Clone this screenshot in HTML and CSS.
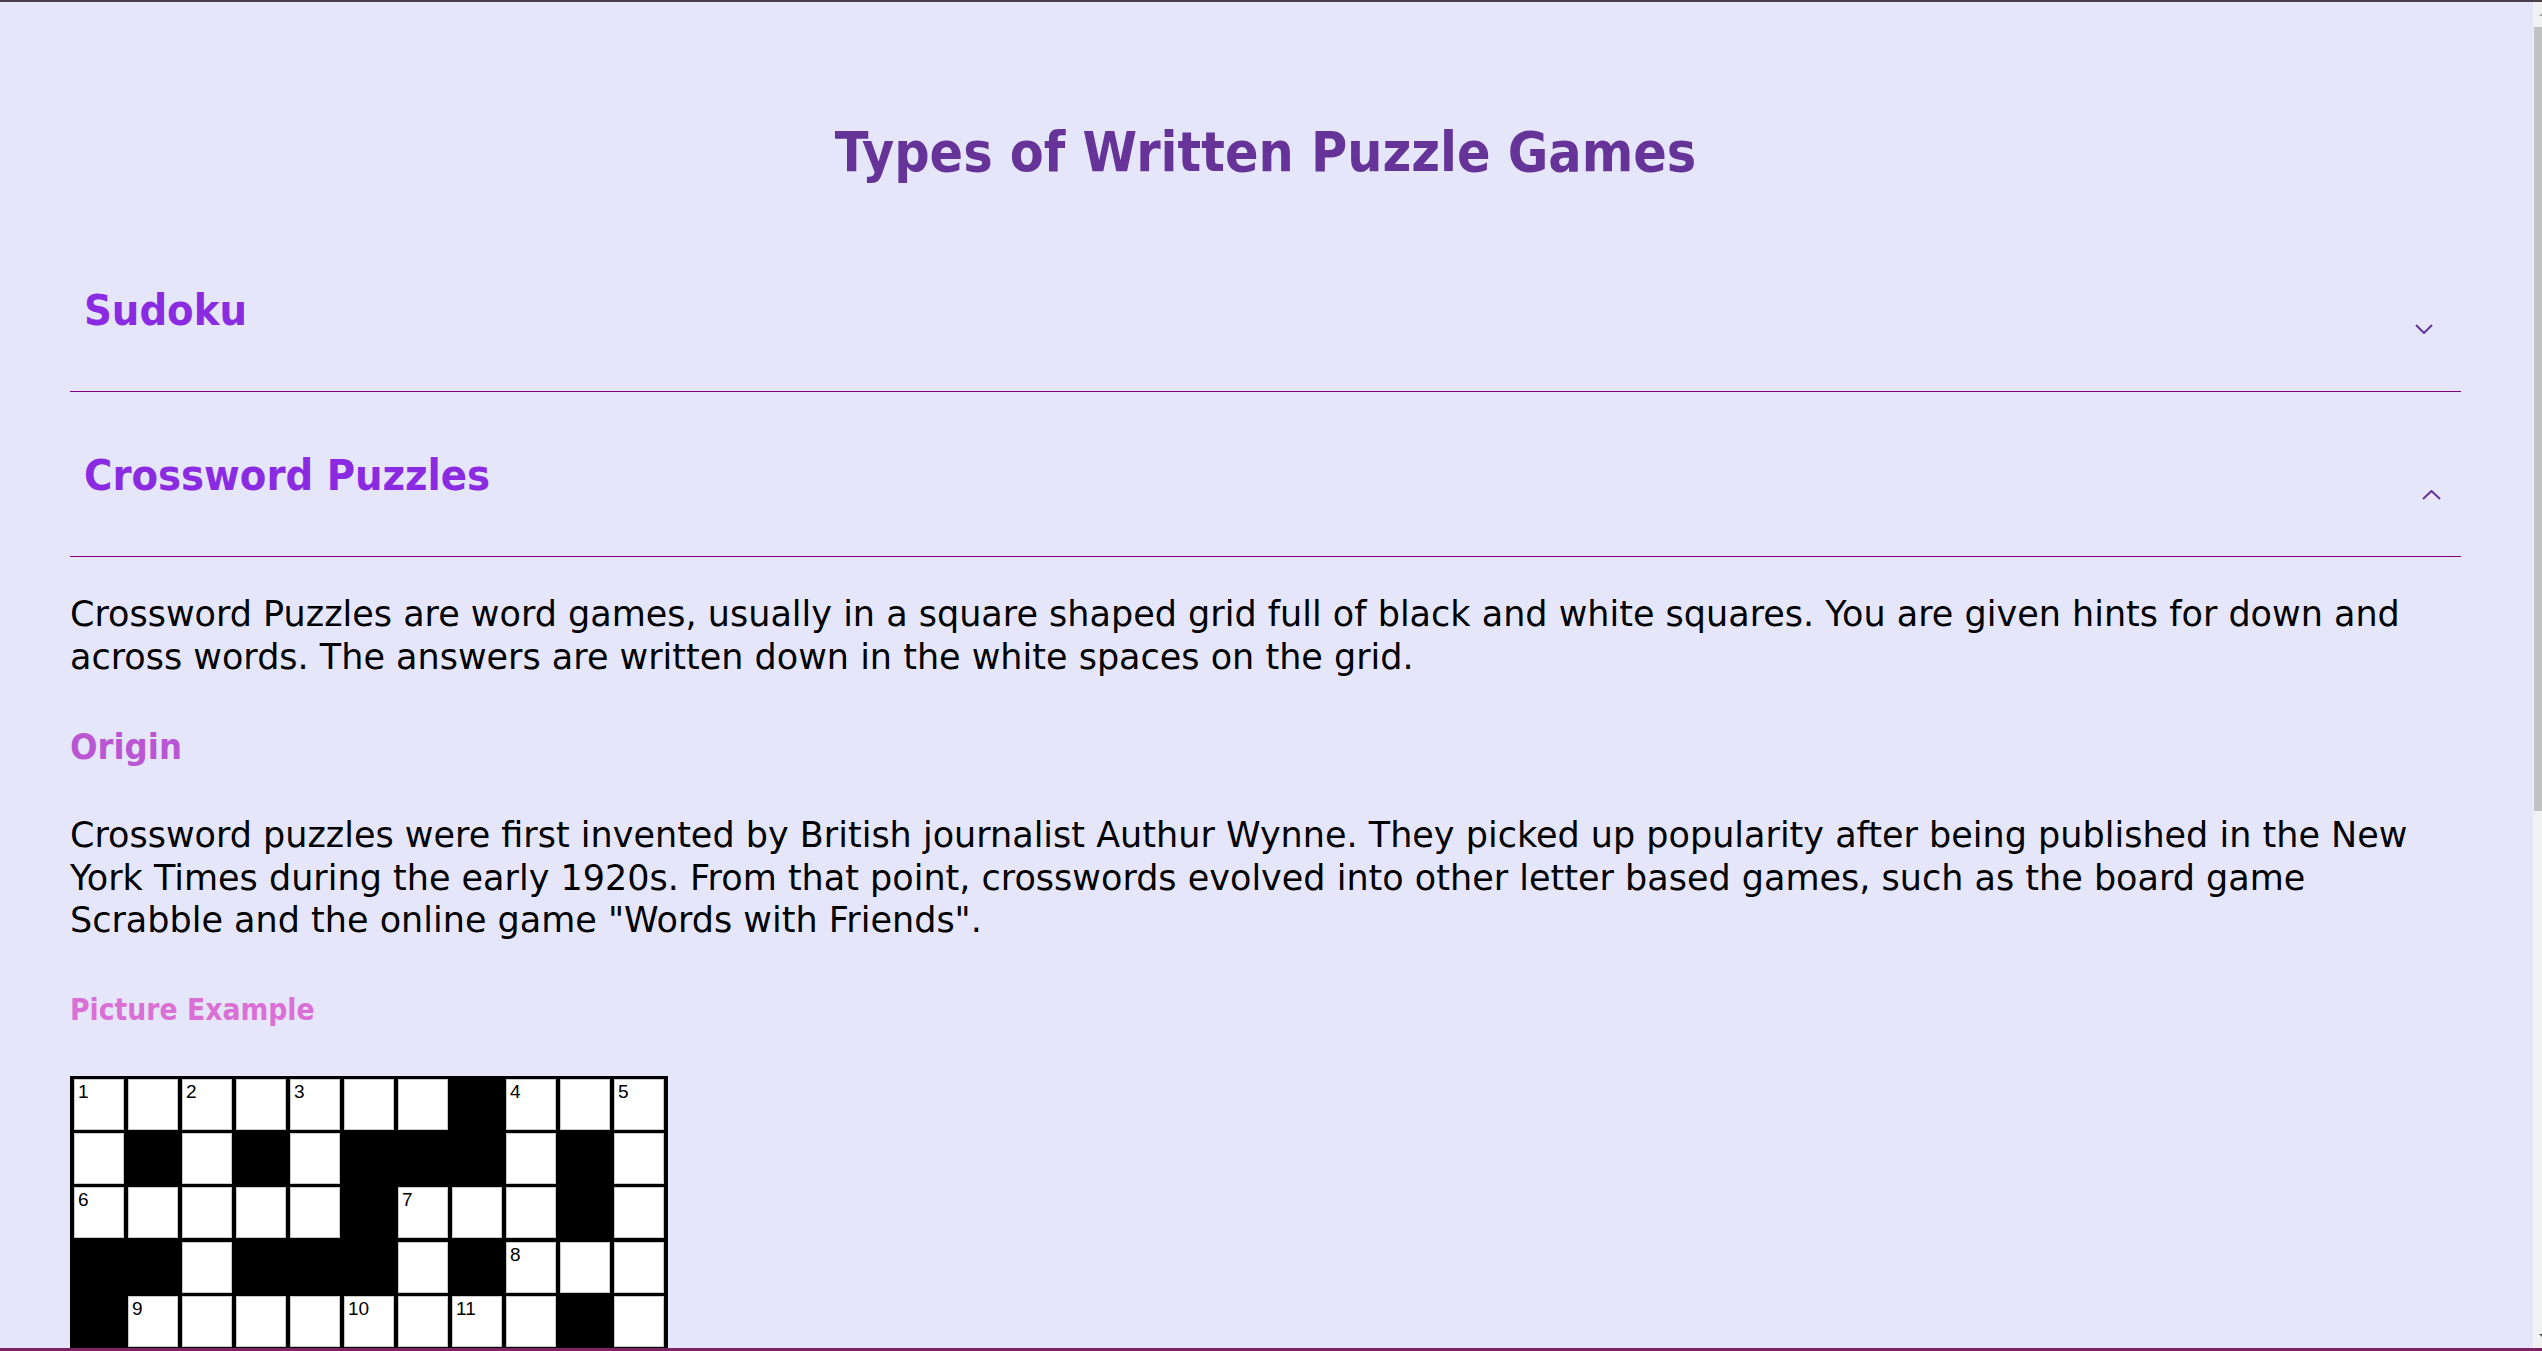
FILE: index.html
```html
<!DOCTYPE html>
<html lang="en">
<head>
<meta charset="utf-8">
<title>Types of Written Puzzle Games</title>
<link rel="stylesheet" href="styles.css">
</head>
<body>
<div class="window">
  <div class="topline"></div>
  <div class="viewport">
    <main class="page">
      <h1 class="title">Types of Written Puzzle Games</h1>

      <section class="acc">
        <div class="acc-head">
          <h2 class="acc-title">Sudoku</h2>
          <svg class="chev chev-down" viewBox="0 0 18 10" width="18" height="10"><polyline points="1,1 9,9 17,1"/></svg>
        </div>
      </section>

      <section class="acc">
        <div class="acc-head">
          <h2 class="acc-title">Crossword Puzzles</h2>
          <svg class="chev chev-up" viewBox="0 0 19 10" width="19" height="10"><polyline points="1,9 9.5,1 18,9"/></svg>
        </div>
        <div class="acc-body">
          <p class="text first">Crossword Puzzles are word games, usually in a square shaped grid full of black and white squares. You are given hints for down and across words. The answers are written down in the white spaces on the grid.</p>
          <h3 class="sub">Origin</h3>
          <p class="text">Crossword puzzles were first invented by British journalist Authur Wynne. They picked up popularity after being published in the New York Times during the early 1920s. From that point, crosswords evolved into other letter based games, such as the board game Scrabble and the online game "Words with Friends".</p>
          <h4 class="sub2">Picture Example</h4>
          <div class="grid">
            <div class="c"><span>1</span></div><div class="c"></div><div class="c"><span>2</span></div><div class="c"></div><div class="c"><span>3</span></div><div class="c"></div><div class="c"></div><div class="b"></div><div class="c"><span>4</span></div><div class="c"></div><div class="c"><span>5</span></div>
            <div class="c"></div><div class="b"></div><div class="c"></div><div class="b"></div><div class="c"></div><div class="b"></div><div class="b"></div><div class="b"></div><div class="c"></div><div class="b"></div><div class="c"></div>
            <div class="c"><span>6</span></div><div class="c"></div><div class="c"></div><div class="c"></div><div class="c"></div><div class="b"></div><div class="c"><span>7</span></div><div class="c"></div><div class="c"></div><div class="b"></div><div class="c"></div>
            <div class="b"></div><div class="b"></div><div class="c"></div><div class="b"></div><div class="b"></div><div class="b"></div><div class="c"></div><div class="b"></div><div class="c"><span>8</span></div><div class="c"></div><div class="c"></div>
            <div class="b"></div><div class="c"><span>9</span></div><div class="c"></div><div class="c"></div><div class="c"></div><div class="c"><span>10</span></div><div class="c"></div><div class="c"><span>11</span></div><div class="c"></div><div class="b"></div><div class="c"></div>
          </div>
        </div>
      </section>
    </main>
    <div class="scrollbar">
      <div class="sb-btn"><span class="sb-arrow-up"></span></div>
      <div class="sb-thumb"></div>
      <div class="sb-track"></div>
      <div class="sb-btn sb-btn-bottom"><span class="sb-arrow-down"></span></div>
    </div>
  </div>
  <div class="bottomline"></div>
</div>
</body>
</html>
```

FILE: styles.css
```css
html, body {
  margin: 0;
  padding: 0;
  height: 100%;
  overflow: hidden;
}

body {
  background: #e6e6fa;
  font-family: "DejaVu Sans Condensed", "DejaVu Sans", sans-serif;
  color: #000;
}

.window {
  height: 100vh;
  display: flex;
  flex-direction: column;
}

.topline {
  height: 2px;
  background: #4b3f4b;
  flex: none;
}

.bottomline {
  height: 3px;
  background: #7d2262;
  flex: none;
}

.viewport {
  flex: 1;
  display: flex;
  min-height: 0;
}

.page {
  flex: 1;
  min-width: 0;
  overflow: hidden;
  padding: 0 72px 0 70px;
}

.title {
  margin: 118px 0 43px;
  font-size: 55px;
  line-height: 64px;
  font-weight: bold;
  text-align: center;
  color: #663399;
}

.acc-head {
  display: flex;
  justify-content: space-between;
  align-items: flex-start;
  padding: 58px 0 56px 14px;
  border-bottom: 1px solid #800080;
}

.acc-title {
  margin: 0;
  font-size: 43px;
  line-height: 50px;
  font-weight: bold;
  color: #8a2be2;
}

.chev {
  flex: none;
  fill: none;
  stroke: #663399;
  stroke-width: 2;
}

.chev-down {
  margin: 39px 28px 0 0;
}

.chev-up {
  margin: 40px 20px 0 0;
}

.text {
  margin: 47px 0 0;
  font-family: "DejaVu Sans", sans-serif;
  font-size: 35px;
  line-height: 42.5px;
}

.text.first {
  margin-top: 36px;
}

.sub {
  margin: 48px 0 0;
  font-size: 36px;
  line-height: 41px;
  font-weight: bold;
  color: #ba55d3;
}

.sub2 {
  margin: 50px 0 0;
  font-size: 29.7px;
  line-height: 35px;
  font-weight: bold;
  color: #da70d6;
}

.grid {
  margin-top: 49px;
  width: fit-content;
  display: grid;
  grid-template-columns: repeat(11, 50px);
  grid-auto-rows: 51px;
  column-gap: 4px;
  row-gap: 3.3px;
  padding: 3.3px 4px;
  background: #000;
}

.grid .c {
  background: #fff;
  box-shadow: inset 0 0 0 1px #c9c9c9;
  padding: 3px 0 0 4px;
  font-family: "Liberation Sans", Arial, sans-serif;
  font-size: 19px;
  line-height: 19px;
  color: #000;
}

.grid .b {
  background: #000;
}

.scrollbar {
  width: 9px;
  flex: none;
  display: flex;
  flex-direction: column;
  background: #f1f1f1;
}

.sb-btn {
  height: 25px;
  flex: none;
  display: flex;
  justify-content: flex-end;
  align-items: center;
}

.sb-thumb {
  height: 784px;
  flex: none;
  margin-left: 1px;
  background: #c1c1c1;
}

.sb-track {
  flex: 1;
}

.sb-arrow-up {
  width: 0;
  height: 0;
  border-left: 3px solid transparent;
  border-bottom: 3px solid #a3a3a3;
}

.sb-arrow-down {
  width: 0;
  height: 0;
  border-left: 3px solid transparent;
  border-top: 3px solid #505050;
}
```
